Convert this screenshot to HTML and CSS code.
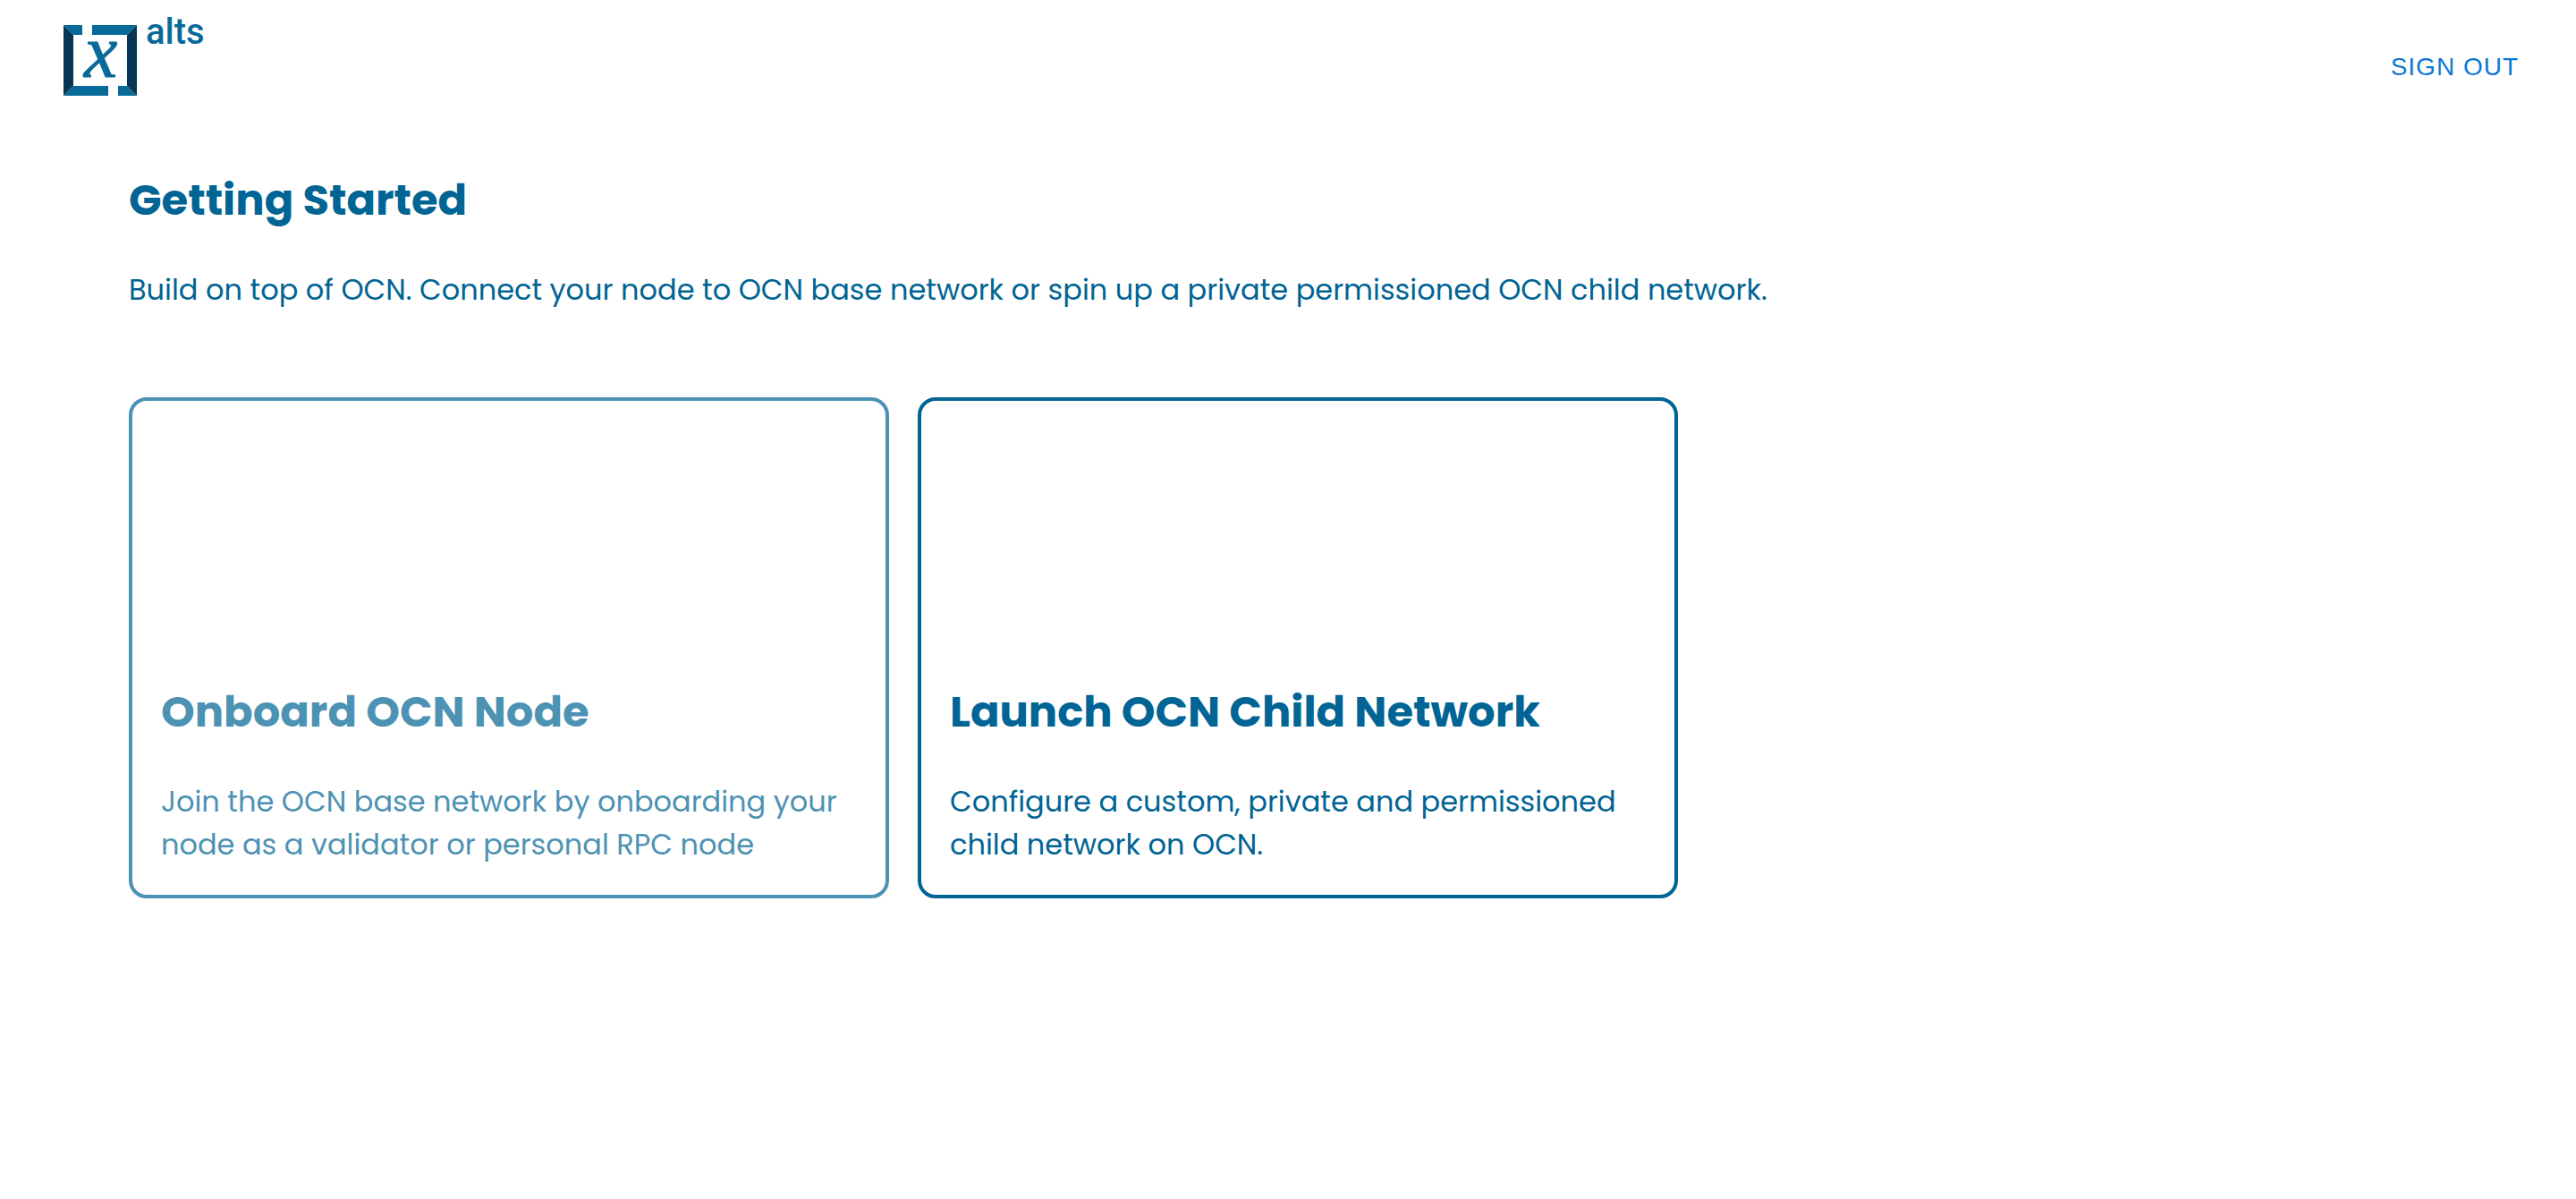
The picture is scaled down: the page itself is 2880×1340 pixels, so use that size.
FILE: index.html
```html
<!DOCTYPE html>
<html lang="en">
<head>
<meta charset="utf-8">
<meta name="viewport" content="width=device-width, initial-scale=1">
<title>Getting Started - Xalts</title>
<link rel="stylesheet" href="styles.css">
</head>
<body>
<header class="topbar">
  <a class="logo" href="#" aria-label="Xalts home">
    <svg class="logo-art" viewBox="0 -16 168 112" role="img" aria-label="xalts">
      <g fill="#076a99">
        <path d="M1 12H22V23H12Z"/>
        <path d="M33 12H83L72 23H33Z"/>
        <path d="M1 91L12 80H51V91Z"/>
        <path d="M62 80H72L83 91H62Z"/>
      </g>
      <g fill="#053653">
        <path d="M1 12L12 23V80L1 91Z"/>
        <path d="M83 12L72 23V80L83 91Z"/>
      </g>
      <text class="logo-x" x="24" y="70">x</text>
      <text class="logo-name" x="93" y="33">alts</text>
    </svg>
  </a>
  <button class="sign-out" type="button">SIGN OUT</button>
</header>
<main class="content">
  <h1 class="title">Getting Started</h1>
  <p class="text">Build on top of OCN. Connect your node to OCN base network or spin up a private permissioned OCN child network.</p>
  <div class="cards">
    <a class="card card-muted" href="#">
      <h2 class="title">Onboard OCN Node</h2>
      <p class="text">Join the OCN base network by onboarding your node as a validator or personal RPC node</p>
    </a>
    <a class="card" href="#">
      <h2 class="title">Launch OCN Child Network</h2>
      <p class="text">Configure a custom, private and permissioned child network on OCN.</p>
    </a>
  </div>
</main>
</body>
</html>
```
FILE: styles.css
```css
* {
  box-sizing: border-box;
}

body {
  margin: 0;
  background: #fff;
  color: #006494;
  font-family: Poppins, Inter, sans-serif;
}

.topbar {
  display: flex;
  align-items: flex-end;
  justify-content: space-between;
  padding: 0 64px 16px 70px;
}

.logo {
  display: block;
}

.logo-art {
  display: block;
  width: 168px;
  height: 112px;
}

.logo-x {
  fill: #076a99;
  stroke: #076a99;
  stroke-width: 1px;
  font: italic 84px "Liberation Serif", serif;
}

.logo-name {
  fill: #076a99;
  font: 500 40px Roboto, sans-serif;
}

.sign-out {
  padding: 21px 0;
  border: 0;
  background: none;
  color: #0b78d4;
  font: 28px/32px "Liberation Sans", sans-serif;
  letter-spacing: 1px;
  cursor: pointer;
}

.content {
  padding: 60px 144px;
}

.title {
  margin: 0;
  font-size: 48px;
  font-weight: 700;
  line-height: 72px;
}

.text {
  margin: 40px 0 0;
  font-size: 32px;
  line-height: 48px;
}

.cards {
  display: flex;
  flex-wrap: wrap;
  gap: 32px;
  margin-top: 96px;
}

.card {
  display: flex;
  flex-direction: column;
  justify-content: flex-end;
  flex: 0 1 850px;
  min-height: 560px;
  padding: 32px;
  border: 4px solid #006494;
  border-radius: 20px;
  color: inherit;
  text-decoration: none;
}

.card-muted {
  opacity: 0.7;
}
```
